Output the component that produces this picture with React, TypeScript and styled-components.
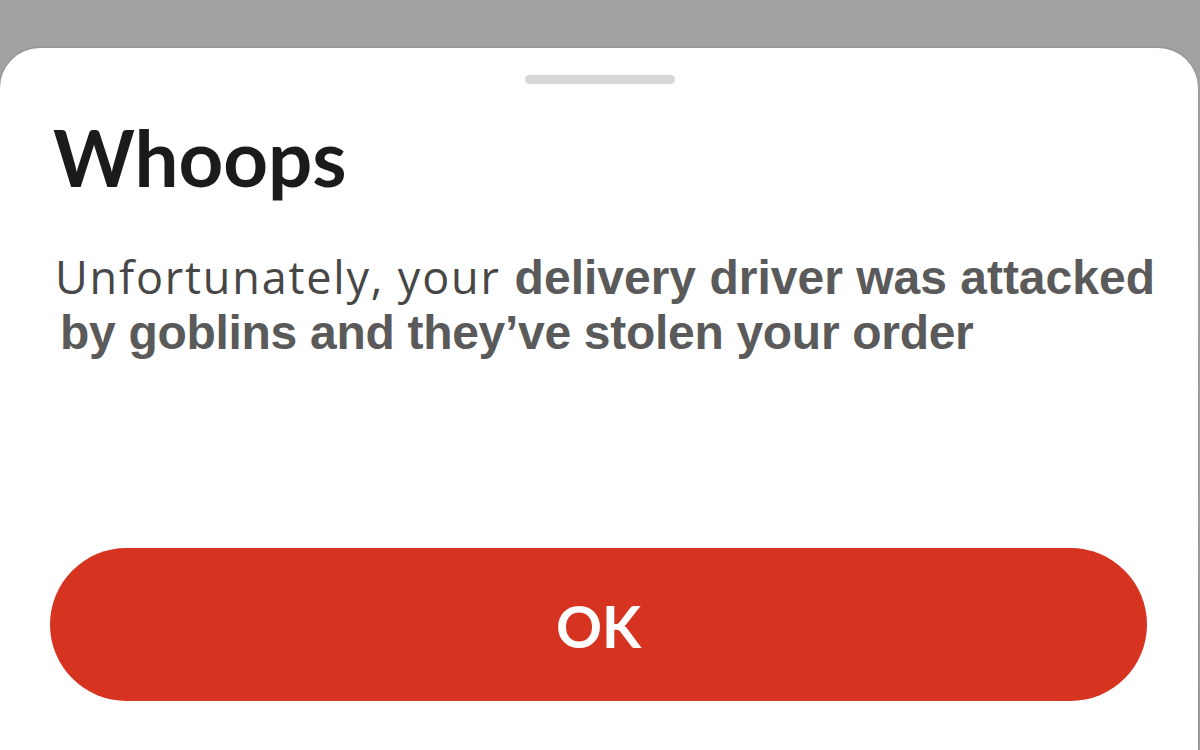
import styled, { createGlobalStyle } from 'styled-components'

const GlobalStyle = createGlobalStyle`
  html, body {
    margin: 0;
    padding: 0;
    background: #a0a0a0;
    overflow: hidden;
  }
  #root {
    height: 750px;
  }
`;

const Backdrop = styled.div`
  height: 750px;
  padding-top: 48px;
  box-sizing: border-box;
  background: linear-gradient(#a2a2a2, #9c9c9c);
`;

const Sheet = styled.div`
  height: 702px;
  margin-right: 2px;
  background: #fff;
  border-radius: 40px 40px 0 0;
  box-shadow: 0 -1px 2px rgba(0, 0, 0, 0.12);
  display: flex;
  flex-direction: column;
`;

const Handle = styled.div`
  align-self: center;
  width: 150px;
  height: 9px;
  margin-top: 27px;
  margin-left: 2px;
  border-radius: 5px;
  background: #d6d6d6;
`;

const Title = styled.h1`
  margin: 34px 0 0 53px;
  font-family: Lato, 'Noto Sans', sans-serif;
  font-weight: 700;
  font-size: 78px;
  line-height: 1;
  color: #1b1b1b;
`;

const Message = styled.div`
  margin-top: 53px;
  padding-left: 55px;
  font-family: 'Liberation Sans', Arial, sans-serif;
  font-size: 48px;
  line-height: 55px;
  white-space: nowrap;
`;

const Line = styled.div<{ $indent?: number; $tracking?: number }>`
  padding-left: ${p => p.$indent ?? 0}px;
  letter-spacing: ${p => p.$tracking ?? 0}px;
`;

const Plain = styled.span`
  font-family: 'Open Sans', 'Liberation Sans', sans-serif;
  font-size: 45px;
  font-weight: 400;
  letter-spacing: 1.8px;
  color: #474747;
  margin-right: 14px;
`;

const Strong = styled.span`
  font-weight: 700;
  color: #5a5a5a;
`;

const OkButton = styled.button`
  margin: 188px 51px 0 50px;
  height: 153px;
  border: none;
  border-radius: 77px;
  background: #d63320;
  color: #fff;
  font-family: Lato, 'Noto Sans', sans-serif;
  font-weight: 700;
  font-size: 57px;
  line-height: 1;
  padding: 3px 0 0;
  display: flex;
  align-items: center;
  justify-content: center;
  cursor: pointer;
`;

export default function App() {
  return (
    <>
      <GlobalStyle />
      <Backdrop>
        <Sheet>
          <Handle />
          <Title>Whoops</Title>
          <Message>
            <Line>
              <Plain>Unfortunately, your</Plain>
              <Strong>delivery driver was attacked</Strong>
            </Line>
            <Line $indent={5} $tracking={-0.3}>
              <Strong>by goblins and they’ve stolen your order</Strong>
            </Line>
          </Message>
          <OkButton>OK</OkButton>
        </Sheet>
      </Backdrop>
    </>
  )
}
